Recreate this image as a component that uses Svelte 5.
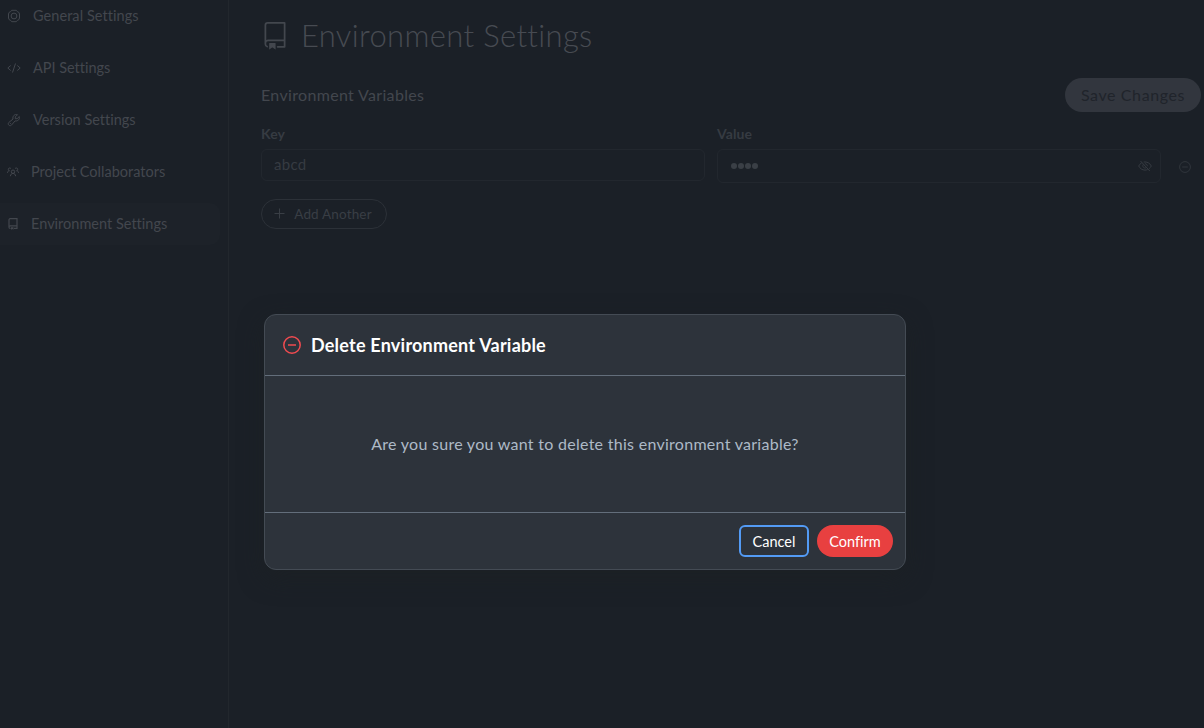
<script>
  const items = [
    { icon: 'gear', label: 'General Settings', spacing: 0.06 },
    { icon: 'code', label: 'API Settings', spacing: -0.02 },
    { icon: 'wrench', label: 'Version Settings', spacing: 0 },
    { icon: 'people', label: 'Project Collaborators', spacing: 0.01 },
    { icon: 'repo', label: 'Environment Settings', spacing: 0.01, active: true }
  ];
</script>

{#snippet repo(size)}
  <svg width={size} height={size} viewBox="0 0 24 24" fill="currentColor">
    <path d="M3 2.75A2.75 2.75 0 0 1 5.75 0h14.5a.75.75 0 0 1 .75.75v20.5a.75.75 0 0 1-.75.75h-6a.75.75 0 0 1 0-1.5h5.25v-4H6A1.5 1.5 0 0 0 4.5 18v.75c0 .716.43 1.334 1.05 1.605a.75.75 0 0 1-.6 1.374A3.251 3.251 0 0 1 3 18.75ZM19.5 1.5H5.75c-.69 0-1.25.56-1.25 1.25v12.651A2.989 2.989 0 0 1 6 15h13.5Z" />
    <path d="M7 18.25a.25.25 0 0 1 .25-.25h5a.25.25 0 0 1 .25.25v5.01a.25.25 0 0 1-.397.201l-2.206-1.604a.25.25 0 0 0-.294 0L7.397 23.46a.25.25 0 0 1-.397-.2Z" />
  </svg>
{/snippet}

<div class="page">
  <nav>
    {#each items as item}
      <div class="item" class:active={item.active}>
        {#if item.icon === 'gear'}
          <svg width="14" height="14" viewBox="0 0 14 14" fill="none" stroke="currentColor">
            <path d="M4.700 1.300h4.600l1 1.300 1.500.7.700 1.700v4l-.7 1.700-1.500.7-1 1.300H4.700l-1-1.300-1.500-.7L1.500 9V5l.7-1.700 1.500-.7Z" />
            <circle cx="7" cy="7" r="2.900" />
          </svg>
        {:else if item.icon === 'code'}
          <svg width="14" height="14" viewBox="0 0 14 14" fill="none" stroke="currentColor">
            <path d="M3.700 4.500.8 7l2.900 2.500M10.300 4.500 13.200 7l-2.900 2.500M8.500 2.500l-3 9" />
          </svg>
        {:else if item.icon === 'wrench'}
          <svg width="14" height="14" viewBox="0 0 14 14" fill="none" stroke="currentColor" stroke-linejoin="round">
            <path d="M10.500 1.700 8.300 3.900v1.800h1.800l2.200-2.200c.8 2.500-1.300 5-4.200 4.400l-3.700 4.300c-1.600 1.500-4.200-.6-2.700-2.600L6 6c-.7-2.900 1.700-5.200 4.500-4.300Z" />
            <path d="M3 10.500h.8" />
          </svg>
        {:else if item.icon === 'people'}
          <svg width="12" height="12" viewBox="0 0 12 12" fill="none" stroke="currentColor">
            <circle cx="6" cy="5.700" r="1.700" />
            <path d="M3.400 10.200c.2-1.800 1.100-2.800 2.600-2.800s2.400 1 2.600 2.800M4 2.700C3.300 1.600 1.300 1.800 1.300 3.400c0 .8.500 1.300 1.300 1.400M2.200 4.800C1 4.900.5 5.700.5 6.900M8 2.700c.7-1.100 2.700-.9 2.700.7 0 .8-.5 1.300-1.300 1.400M9.800 4.800c1.200.1 1.700.9 1.700 2.100" />
          </svg>
        {:else}
          <svg width="12" height="12" viewBox="0 0 12 12" fill="none" stroke="currentColor" stroke-width="1.200">
            <path d="M3.500 10.400h-.3c-.8 0-1.200-.5-1.200-1.200V1.900C2 1.200 2.400.7 3.100.7h6.900v9.700H7M2 9c0-.7.400-1.100 1.200-1.100H10" />
            <path d="M4 9.200h2.500v2.600l-1.250-.9-1.250.9Z" fill="currentColor" stroke="none" />
          </svg>
        {/if}
        <span style="letter-spacing: {item.spacing}px">{item.label}</span>
      </div>
    {/each}
  </nav>

  <main>
    <header>
      {@render repo(28)}
      <h1>Environment Settings</h1>
    </header>
    <div class="bar">
      <h2>Environment Variables</h2>
      <button class="save">Save Changes</button>
    </div>
    <div class="fields">
      <div class="field">
        <b>Key</b>
        <div class="input">abcd</div>
      </div>
      <div class="field">
        <b>Value</b>
        <div class="input secret">
          <span class="dots"><i></i><i></i><i></i><i></i></span>
          <svg width="14" height="14" viewBox="0 0 14 14" fill="none" stroke="currentColor">
            <path d="M3.700 3.800C2.300 4.600 1.300 5.800.7 7c1.200 2.500 3.600 4.100 6.300 4.100.9 0 1.800-.2 2.600-.6M5.700 3c3.300-.5 6.200 1.100 7.600 4-.5 1-1.200 1.900-2.100 2.600M2.500 2l9.300 10M5.200 5.500c-1.200 2 .7 4.300 2.900 3.300M6.900 4.700c1.400 0 2.500 1.100 2.500 2.500" />
          </svg>
        </div>
      </div>
      <svg class="remove" width="12" height="12" viewBox="0 0 12 12" fill="none" stroke="currentColor">
        <circle cx="6" cy="6" r="5.400" />
        <path d="M3.200 6h5.600" />
      </svg>
    </div>
    <button class="add">
      <svg width="11" height="11" viewBox="0 0 11 11" stroke="currentColor"><path d="M5.500.5v10M.5 5.500h10" /></svg>
      <span>Add Another</span>
    </button>
  </main>

  <section class="modal">
    <div class="head">
      <svg width="18" height="18" viewBox="0 0 18 18" fill="none" stroke="#f04b50" stroke-width="1.500">
        <circle cx="9" cy="9" r="8.200" />
        <path d="M5 9h8" />
      </svg>
      <h3>Delete Environment Variable</h3>
    </div>
    <div class="body"><p>Are you sure you want to delete this environment variable?</p></div>
    <div class="foot">
      <button class="cancel">Cancel</button>
      <button class="confirm">Confirm</button>
    </div>
  </section>
</div>

<style>
  :global(body) {
    background: #1b2027;
    overflow: hidden;
  }
  .page {
    position: relative;
    display: flex;
    width: 1204px;
    height: 728px;
    overflow: hidden;
    box-sizing: border-box;
    background: #1b2027;
    color: #43474e;
    font-family: Lato, "Liberation Sans", sans-serif;
    font-variant-ligatures: none;
  }
  .page * {
    box-sizing: border-box;
  }
  svg {
    display: block;
    flex: none;
  }
  h1, h2, h3, p {
    margin: 0;
    white-space: nowrap;
  }
  button {
    font-family: inherit;
    font-variant-ligatures: none;
    padding: 0;
    display: flex;
    align-items: center;
    justify-content: center;
    white-space: nowrap;
  }
  nav {
    width: 229px;
    flex: none;
    border-right: 1px solid #22272d;
    display: flex;
    flex-direction: column;
    gap: 10px;
    margin-top: -5px;
    padding-right: 8px;
  }
  .item {
    height: 42px;
    flex: none;
    display: flex;
    align-items: center;
    gap: 12px;
    padding-left: 7px;
    border-radius: 0 10px 10px 0;
    font-size: 14.500px;
    white-space: nowrap;
  }
  .item span {
    padding-bottom: 1px;
  }
  .active {
    background: #1d2229;
  }
  main {
    flex: 1;
    padding: 16px 3px 0 32px;
  }
  header {
    display: flex;
    align-items: center;
    gap: 12px;
    height: 40px;
  }
  h1 {
    font-size: 31px;
    line-height: 40px;
    font-weight: 300;
    letter-spacing: 0.34px;
    color: #474b52;
    padding-bottom: 2px;
  }
  .bar {
    margin-top: 22px;
    height: 34px;
    display: flex;
    align-items: center;
    justify-content: space-between;
  }
  h2 {
    font-size: 16px;
    font-weight: 400;
    letter-spacing: 0.33px;
    padding-bottom: 2px;
  }
  .save {
    width: 136px;
    height: 34px;
    border: 0;
    border-radius: 17px;
    background: #32363e;
    color: #20242b;
    font-size: 16px;
    letter-spacing: 0.6px;
    padding-bottom: 1px;
  }
  .fields {
    display: flex;
    gap: 12px;
    margin-top: 13px;
  }
  .field {
    width: 444px;
    color: #363b42;
  }
  b {
    display: block;
    height: 24px;
    line-height: 18px;
    font-size: 14px;
    letter-spacing: 0.1px;
  }
  .input {
    height: 32px;
    border: 1px solid #22272e;
    border-radius: 6px;
    padding: 0 12px 2px;
    display: flex;
    align-items: center;
    font-size: 15px;
    letter-spacing: 0.3px;
  }
  .secret {
    height: 34px;
    padding: 0 8px 0 13px;
    justify-content: space-between;
  }
  .dots {
    display: flex;
    gap: 1px;
  }
  .dots i {
    width: 6px;
    height: 6px;
    border-radius: 50%;
    background: #3a3f46;
  }
  .remove {
    margin: 36px 0 0 6px;
    color: #30353c;
  }
  .add {
    width: 126px;
    height: 30px;
    margin-top: 16px;
    border: 1px solid #2c3138;
    border-radius: 15px;
    background: none;
    color: #393e45;
    font-size: 13.500px;
    letter-spacing: 0.16px;
    gap: 9px;
    padding: 0 2px 1px 0;
  }
  .modal {
    position: absolute;
    left: 264px;
    top: 314px;
    width: 642px;
    height: 256px;
    border: 1px solid #444b54;
    border-radius: 12px;
    background: #2d333b;
    box-shadow: 0 8px 24px rgba(28, 33, 36, 0.7);
    display: flex;
    flex-direction: column;
  }
  .head {
    height: 61px;
    display: flex;
    align-items: center;
    gap: 10px;
    padding-left: 18px;
    border-bottom: 1px solid #636e7b;
  }
  h3 {
    font-size: 18px;
    letter-spacing: 0.22px;
    color: #fff;
  }
  .body {
    flex: 1;
    display: flex;
    align-items: center;
    justify-content: center;
    padding-bottom: 2px;
    color: #adbac7;
    font-size: 16px;
    letter-spacing: 0.28px;
  }
  .foot {
    height: 57px;
    border-top: 1px solid #636e7b;
    display: flex;
    align-items: center;
    justify-content: flex-end;
    gap: 8px;
    padding-right: 12px;
  }
  .foot button {
    height: 32px;
    font-size: 14.500px;
    color: #fff;
  }
  .cancel {
    width: 70px;
    border: 2px solid #539bf5;
    border-radius: 6px;
    background: none;
  }
  .confirm {
    width: 76px;
    border: 0;
    border-radius: 16px;
    background: #e84040;
  }
</style>
